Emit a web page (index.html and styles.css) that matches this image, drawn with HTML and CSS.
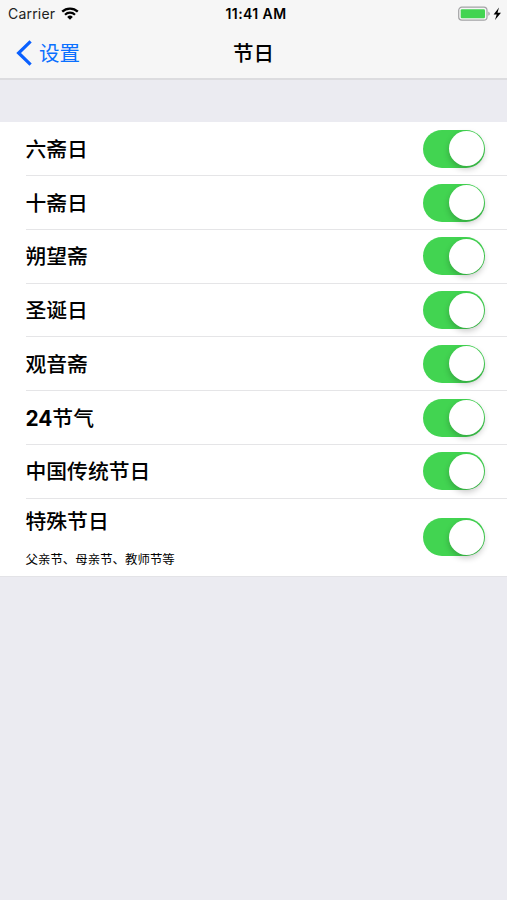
FILE: index.html
```html
<!DOCTYPE html>
<html lang="zh-CN">
<head>
    <meta charset="UTF-8">
    <meta name="viewport" content="width=device-width, initial-scale=1.0">
    <title>节日</title>
    <link rel="stylesheet" href="styles.css">
</head>
<body>

<header class="header">
    <div class="status-bar">
        <div class="status-left">
            <span class="carrier">Carrier</span>
            <svg class="wifi" viewBox="0 0 18 13" width="18" height="13">
                <path d="M1.2 4.7a11.2 11.2 0 0 1 15.6 0" fill="none" stroke="#000" stroke-width="2.3"/>
                <path d="M4 7.7a7.2 7.2 0 0 1 10 0" fill="none" stroke="#000" stroke-width="2.2"/>
                <path d="M9 12.7L6.2 9.9a4 4 0 0 1 5.6 0z" fill="#000"/>
            </svg>
        </div>
        <div class="time">11:41 AM</div>
        <div class="status-right">
            <svg viewBox="0 0 44 16" width="44" height="16">
                <rect x=".7" y="1.2" width="28.3" height="13" rx="3.2" fill="none" stroke="#a3a3a5" stroke-width="1.2"/>
                <rect x="2.7" y="3.2" width="24.3" height="9" rx="1.2" fill="#42d451"/>
                <path d="M30.3 5.6q1.5.7 1.5 2.1t-1.5 2.1z" fill="#a3a3a5"/>
                <path d="M41 1.5L35.6 8.5h3.1l-1.7 5.6 6-7.3h-3.5z" fill="#000"/>
            </svg>
        </div>
    </div>
    <nav class="nav-bar">
        <a class="back">
            <svg viewBox="0 0 16 26" width="16" height="26">
                <path d="M14.6 1.4L2.6 13l12 11.6" fill="none" stroke="#0a60ff" stroke-width="3.2"/>
            </svg>
            <span>设置</span>
        </a>
        <h1 class="title">节日</h1>
    </nav>
</header>

<ul class="list">
    <li class="row">
        <span class="name">六斋日</span>
        <span class="switch"></span>
    </li>
    <li class="row">
        <span class="name">十斋日</span>
        <span class="switch"></span>
    </li>
    <li class="row">
        <span class="name">朔望斋</span>
        <span class="switch"></span>
    </li>
    <li class="row">
        <span class="name">圣诞日</span>
        <span class="switch"></span>
    </li>
    <li class="row">
        <span class="name">观音斋</span>
        <span class="switch"></span>
    </li>
    <li class="row">
        <span class="name"><b>24</b>节气</span>
        <span class="switch"></span>
    </li>
    <li class="row">
        <span class="name">中国传统节日</span>
        <span class="switch"></span>
    </li>
    <li class="row row-tall">
        <div class="labels">
            <span class="name">特殊节日</span>
            <span class="note">父亲节、母亲节、教师节等</span>
        </div>
        <span class="switch"></span>
    </li>
</ul>

</body>
</html>
```

FILE: styles.css
```css
* {
    box-sizing: border-box;
}

body {
    margin: 0;
    min-height: 900px;
    background-color: #ebebf1;
    color: #000;
    font-family: Inter, "Noto Sans CJK SC", sans-serif;
}

.header {
    height: 80px;
    background-color: #f6f6f6;
    border-bottom: 2px solid #dcdcdf;
}

.status-bar {
    display: grid;
    grid-template-columns: 1fr auto 1fr;
    align-items: center;
    height: 27px;
    padding: 0 5px 0 8px;
    font-size: 14px;
    line-height: 26px;
}

.status-left {
    display: flex;
    align-items: center;
    gap: 6px;
}

.carrier {
    color: #222;
    letter-spacing: 0.2px;
}

.time {
    padding-left: 2px;
    font-size: 14px;
    font-weight: 600;
    letter-spacing: 0.4px;
}

.status-right {
    display: flex;
    justify-content: flex-end;
}

.nav-bar {
    display: grid;
    grid-template-columns: 1fr auto 1fr;
    align-items: center;
    height: 51px;
    padding: 0 16px;
}

.back {
    display: flex;
    align-items: center;
    gap: 7px;
    color: #0a70ff;
    font-size: 20.5px;
    line-height: 26px;
}

.back span,
.title {
    padding-top: 2px;
}

.title {
    margin: 0;
    font-size: 20.5px;
    font-weight: 500;
    line-height: 26px;
}

.list {
    margin: 42.4px 0 0;
    padding: 0 0 0.5px;
    list-style: none;
    background-color: #fff;
    border-bottom: 1px solid #e3e3e7;
}

.row {
    display: flex;
    justify-content: space-between;
    align-items: center;
    height: 53.75px;
    margin-left: 25.5px;
    padding-right: 22px;
    border-bottom: 1px solid #e5e5e7;
}

.row-tall {
    height: 77px;
    border-bottom: none;
}

.labels {
    display: flex;
    flex-direction: column;
    gap: 14px;
}

.name {
    padding-top: 2px;
    font-size: 20.8px;
    font-weight: 500;
    line-height: 30px;
}

.name b {
    font-weight: 700;
}

.note {
    font-size: 12.45px;
    line-height: 18px;
}

.switch {
    display: flex;
    justify-content: flex-end;
    width: 62.5px;
    height: 38px;
    padding: 1.5px;
    border-radius: 19px;
    background-color: #42d451;
}

.switch::after {
    content: "";
    width: 35px;
    height: 35px;
    border-radius: 50%;
    background-color: #fff;
    box-shadow: 0 3px 6px rgba(0, 0, 0, 0.22);
}
```
